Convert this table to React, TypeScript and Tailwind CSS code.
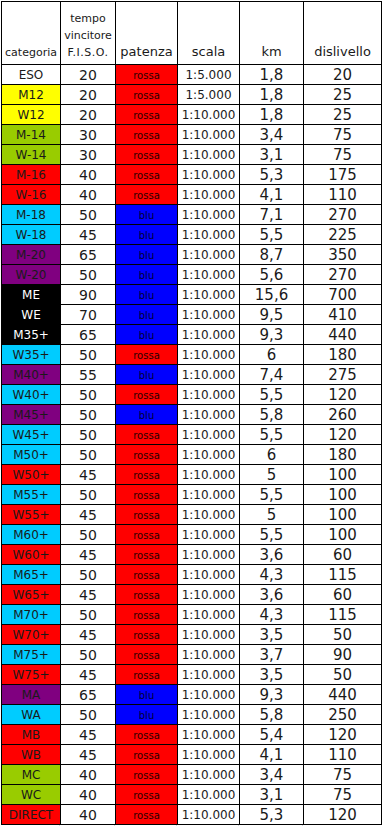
type Row = {
  cat: string;
  bg: string;
  light?: boolean;
  tempo: string;
  pat: "rossa" | "blu";
  scala: string;
  km: string;
  disl: string;
};

const Y = "bg-[#ffff00]";
const G = "bg-[#99cc00]";
const R = "bg-[#ff0000]";
const C = "bg-[#00ccff]";
const P = "bg-[#800080]";
const K = "bg-black";
const W = "bg-white";

const S10 = "1:10.000";

const rows: Row[] = [
  { cat: "ESO", bg: W, tempo: "20", pat: "rossa", scala: "1:5.000", km: "1,8", disl: "20" },
  { cat: "M12", bg: Y, tempo: "20", pat: "rossa", scala: "1:5.000", km: "1,8", disl: "25" },
  { cat: "W12", bg: Y, tempo: "20", pat: "rossa", scala: S10, km: "1,8", disl: "25" },
  { cat: "M-14", bg: G, tempo: "30", pat: "rossa", scala: S10, km: "3,4", disl: "75" },
  { cat: "W-14", bg: G, tempo: "30", pat: "rossa", scala: S10, km: "3,1", disl: "75" },
  { cat: "M-16", bg: R, tempo: "40", pat: "rossa", scala: S10, km: "5,3", disl: "175" },
  { cat: "W-16", bg: R, tempo: "40", pat: "rossa", scala: S10, km: "4,1", disl: "110" },
  { cat: "M-18", bg: C, tempo: "50", pat: "blu", scala: S10, km: "7,1", disl: "270" },
  { cat: "W-18", bg: C, tempo: "45", pat: "blu", scala: S10, km: "5,5", disl: "225" },
  { cat: "M-20", bg: P, tempo: "65", pat: "blu", scala: S10, km: "8,7", disl: "350" },
  { cat: "W-20", bg: P, tempo: "50", pat: "blu", scala: S10, km: "5,6", disl: "270" },
  { cat: "ME", bg: K, light: true, tempo: "90", pat: "blu", scala: S10, km: "15,6", disl: "700" },
  { cat: "WE", bg: K, light: true, tempo: "70", pat: "blu", scala: S10, km: "9,5", disl: "410" },
  { cat: "M35+", bg: K, light: true, tempo: "65", pat: "blu", scala: S10, km: "9,3", disl: "440" },
  { cat: "W35+", bg: C, tempo: "50", pat: "rossa", scala: S10, km: "6", disl: "180" },
  { cat: "M40+", bg: P, tempo: "55", pat: "blu", scala: S10, km: "7,4", disl: "275" },
  { cat: "W40+", bg: C, tempo: "50", pat: "rossa", scala: S10, km: "5,5", disl: "120" },
  { cat: "M45+", bg: P, tempo: "50", pat: "blu", scala: S10, km: "5,8", disl: "260" },
  { cat: "W45+", bg: C, tempo: "50", pat: "rossa", scala: S10, km: "5,5", disl: "120" },
  { cat: "M50+", bg: C, tempo: "50", pat: "rossa", scala: S10, km: "6", disl: "180" },
  { cat: "W50+", bg: R, tempo: "45", pat: "rossa", scala: S10, km: "5", disl: "100" },
  { cat: "M55+", bg: C, tempo: "50", pat: "rossa", scala: S10, km: "5,5", disl: "100" },
  { cat: "W55+", bg: R, tempo: "45", pat: "rossa", scala: S10, km: "5", disl: "100" },
  { cat: "M60+", bg: C, tempo: "50", pat: "rossa", scala: S10, km: "5,5", disl: "100" },
  { cat: "W60+", bg: R, tempo: "45", pat: "rossa", scala: S10, km: "3,6", disl: "60" },
  { cat: "M65+", bg: C, tempo: "50", pat: "rossa", scala: S10, km: "4,3", disl: "115" },
  { cat: "W65+", bg: R, tempo: "45", pat: "rossa", scala: S10, km: "3,6", disl: "60" },
  { cat: "M70+", bg: C, tempo: "50", pat: "rossa", scala: S10, km: "4,3", disl: "115" },
  { cat: "W70+", bg: R, tempo: "45", pat: "rossa", scala: S10, km: "3,5", disl: "50" },
  { cat: "M75+", bg: C, tempo: "50", pat: "rossa", scala: S10, km: "3,7", disl: "90" },
  { cat: "W75+", bg: R, tempo: "45", pat: "rossa", scala: S10, km: "3,5", disl: "50" },
  { cat: "MA", bg: P, tempo: "65", pat: "blu", scala: S10, km: "9,3", disl: "440" },
  { cat: "WA", bg: C, tempo: "50", pat: "blu", scala: S10, km: "5,8", disl: "250" },
  { cat: "MB", bg: R, tempo: "45", pat: "rossa", scala: S10, km: "5,4", disl: "120" },
  { cat: "WB", bg: R, tempo: "45", pat: "rossa", scala: S10, km: "4,1", disl: "110" },
  { cat: "MC", bg: G, tempo: "40", pat: "rossa", scala: S10, km: "3,4", disl: "75" },
  { cat: "WC", bg: G, tempo: "40", pat: "rossa", scala: S10, km: "3,1", disl: "75" },
  { cat: "DIRECT", bg: R, tempo: "40", pat: "rossa", scala: S10, km: "5,3", disl: "120" },
];

const cell = "h-5 border-r border-b border-black flex items-center justify-center whitespace-nowrap";
const head = "h-[63px] border-r border-b border-black flex flex-col items-center justify-end pb-[3px] text-[#1a1a1a]";

const App = () => {
  return (
    <div className="min-h-screen bg-white pt-px pl-px font-['DejaVu_Sans',sans-serif] text-[#1a1a1a]">
      <div className="w-[381px] border-l border-t border-black grid grid-cols-[59px_55px_62px_62px_64px_78px]">
        <div className={`${head} text-[11px]`}>categoria</div>
        <div className={`${head} text-[11px] leading-[17px]`}>
          <span>tempo</span>
          <span>vincitore</span>
          <span className="tracking-[0.5px]">F.I.S.O.</span>
        </div>
        <div className={`${head} text-[13px]`}>patenza</div>
        <div className={`${head} text-[13px]`}>scala</div>
        <div className={`${head} text-[13px]`}>km</div>
        <div className={`${head} text-[13px]`}>dislivello</div>

        {rows.map((r) => (
          <div key={r.cat} className="contents">
            <div className={`${cell} ${r.bg} text-[12px] pt-px ${r.light ? "text-white" : "text-[#1a1a1a]"}`}>
              {r.cat}
            </div>
            <div className={`${cell} text-[14px] pt-px`}>{r.tempo}</div>
            <div
              className={`${cell} text-[10px] pt-[2px] ${
                r.pat === "rossa" ? "bg-[#ff0000] text-[#2a0000]" : "bg-[#0000ff] text-[#000033]"
              }`}
            >
              {r.pat}
            </div>
            <div className={`${cell} text-[12px] pt-px`}>{r.scala}</div>
            <div className={`${cell} text-[15px] pt-px`}>{r.km}</div>
            <div className={`${cell} text-[15px] pt-px`}>{r.disl}</div>
          </div>
        ))}
      </div>
      <div className="w-[381px] h-[3px] grid grid-cols-[59px_55px_62px_62px_64px_78px]">
        <div className="border-r border-dotted border-gray-300" />
        <div className="border-r border-dotted border-gray-300" />
        <div className="border-r border-dotted border-gray-300" />
        <div className="border-r border-dotted border-gray-300" />
        <div className="border-r border-dotted border-gray-300" />
        <div />
      </div>
    </div>
  );
};

export default App;
